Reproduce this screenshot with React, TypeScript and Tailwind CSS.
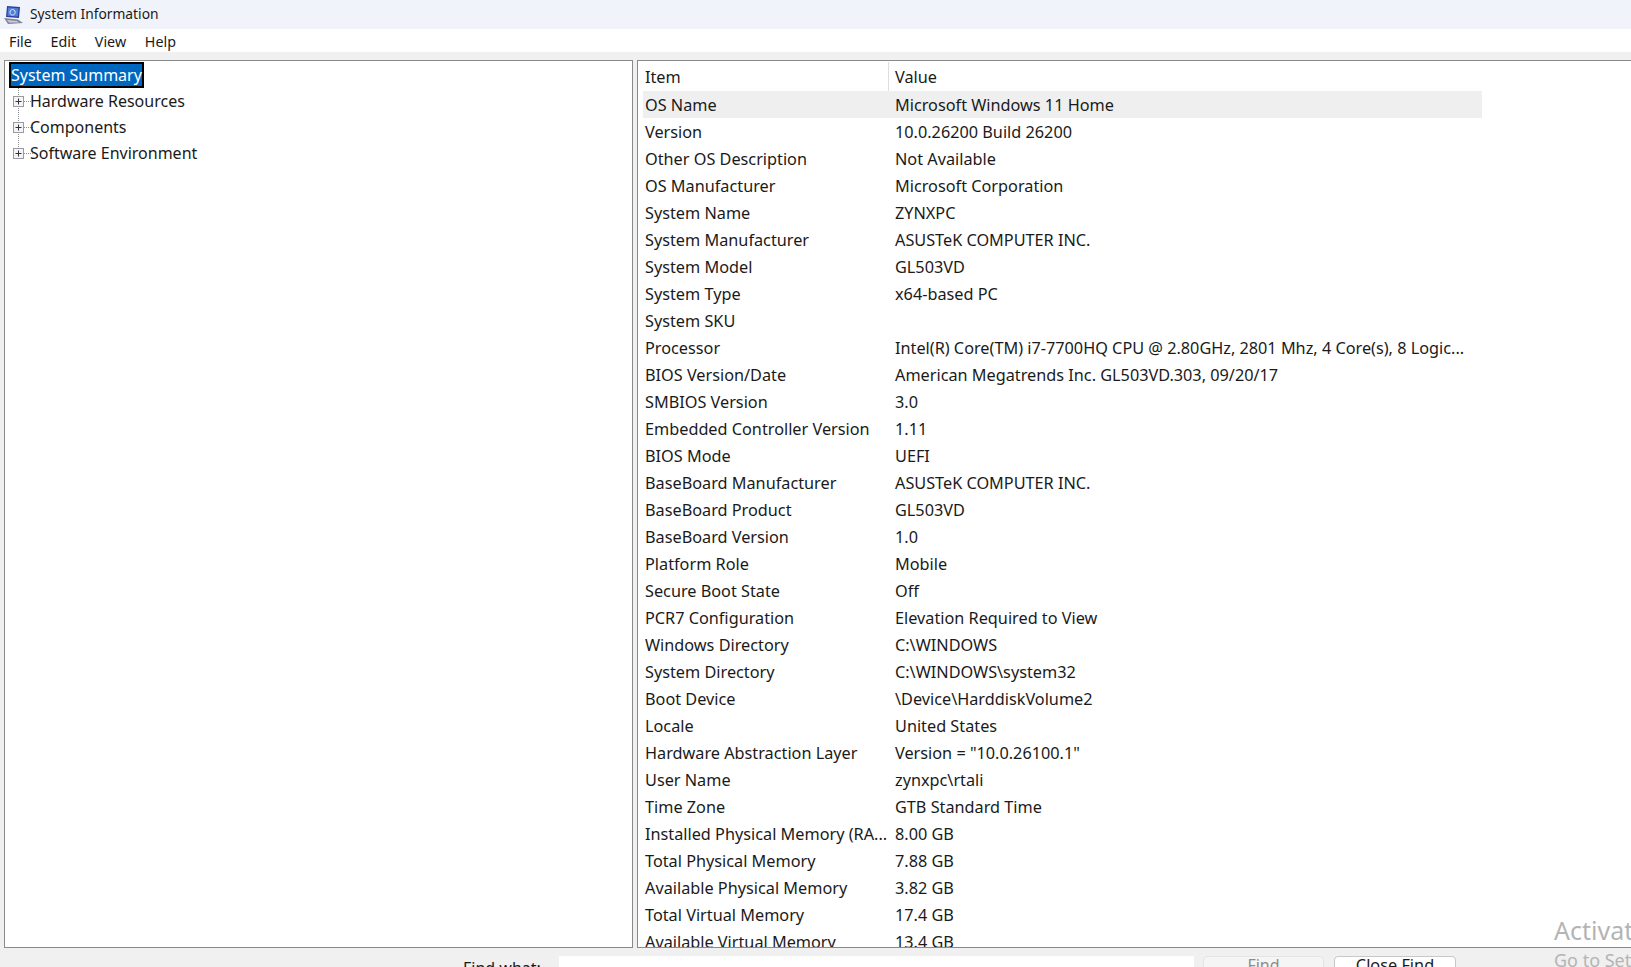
import { Fragment } from 'react';

const rows: [string, string][] = [
  ['OS Name', 'Microsoft Windows 11 Home'],
  ['Version', '10.0.26200 Build 26200'],
  ['Other OS Description', 'Not Available'],
  ['OS Manufacturer', 'Microsoft Corporation'],
  ['System Name', 'ZYNXPC'],
  ['System Manufacturer', 'ASUSTeK COMPUTER INC.'],
  ['System Model', 'GL503VD'],
  ['System Type', 'x64-based PC'],
  ['System SKU', ''],
  ['Processor', 'Intel(R) Core(TM) i7-7700HQ CPU @ 2.80GHz, 2801 Mhz, 4 Core(s), 8 Logic...'],
  ['BIOS Version/Date', 'American Megatrends Inc. GL503VD.303, 09/20/17'],
  ['SMBIOS Version', '3.0'],
  ['Embedded Controller Version', '1.11'],
  ['BIOS Mode', 'UEFI'],
  ['BaseBoard Manufacturer', 'ASUSTeK COMPUTER INC.'],
  ['BaseBoard Product', 'GL503VD'],
  ['BaseBoard Version', '1.0'],
  ['Platform Role', 'Mobile'],
  ['Secure Boot State', 'Off'],
  ['PCR7 Configuration', 'Elevation Required to View'],
  ['Windows Directory', 'C:\\WINDOWS'],
  ['System Directory', 'C:\\WINDOWS\\system32'],
  ['Boot Device', '\\Device\\HarddiskVolume2'],
  ['Locale', 'United States'],
  ['Hardware Abstraction Layer', 'Version = "10.0.26100.1"'],
  ['User Name', 'zynxpc\\rtali'],
  ['Time Zone', 'GTB Standard Time'],
  ['Installed Physical Memory (RA...', '8.00 GB'],
  ['Total Physical Memory', '7.88 GB'],
  ['Available Physical Memory', '3.82 GB'],
  ['Total Virtual Memory', '17.4 GB'],
  ['Available Virtual Memory', '13.4 GB'],
];

function AppIcon() {
  return (
    <svg width="20" height="20" viewBox="0 0 20 20" className="shrink-0">
      <path d="M4 1 L17 2 L16 13 L3 12 Z" fill="#2f3f9e" />
      <path d="M5 2.5 L15.5 3.3 L14.8 11.5 L4.5 10.7 Z" fill="#4f7fd8" />
      <path d="M9.5 4.5 a2.6 2.8 0 1 0 0.1 0 Z" fill="none" stroke="#dfe9fb" strokeWidth="1" />
      <path d="M1 13 L15 14.5 L20 18 L5 19 Z" fill="#7f8598" />
      <path d="M4 15 L14 16 L16 17.4 L6 17.4 Z" fill="#c9ccd8" />
    </svg>
  );
}

// tree expander with the dotted connector lines around it
function Expander({ last }: { last: boolean }) {
  return (
    <svg width="20" height="26" viewBox="0 0 20 26" className="shrink-0">
      <path d={last ? 'M5.5 0 V8' : 'M5.5 0 V26'} stroke="#8f8f8f" strokeDasharray="1 1" />
      <path d="M11 13.5 H20" stroke="#8f8f8f" strokeDasharray="1 1" />
      <rect x="0.5" y="8.5" width="10" height="10" fill="#f4f4f6" stroke="#9a9aa2" />
      <path d="M2.5 13.5 H8.5 M5.5 10.5 V16.5" stroke="#333" />
    </svg>
  );
}

export default function App() {
  const font = { fontFamily: '"Noto Sans", sans-serif' };
  const tree = ['Hardware Resources', 'Components', 'Software Environment'];
  return (
    <div className="relative flex h-[967px] w-[1631px] flex-col overflow-hidden bg-[#f0f0f0] text-[16.25px] text-[#1a1a1a]" style={font}>
      <div className="flex h-[29px] shrink-0 items-center gap-[7px] bg-[#f0f3f9] pl-[3px] text-[13.8px]">
        <AppIcon />
        <span>System Information</span>
      </div>
      <div className="flex h-[23px] shrink-0 items-center gap-[18.7px] bg-white pl-[9px] pt-[2px] text-[14.3px]">
        <span>File</span>
        <span>Edit</span>
        <span>View</span>
        <span>Help</span>
      </div>

      <div className="mt-[8px] flex h-[888px] shrink-0 gap-[4px] pl-[4px]">
        <div className="h-full w-[629px] shrink-0 border border-[#8a8a8a] bg-white pl-[4px] text-[16px]">
          <div className="flex h-[27px] items-center">
            <span className="flex h-[26px] items-center border-2 border-black bg-[#0067c0] text-white">System Summary</span>
          </div>
          {tree.map((t, i) => (
            <div key={t} className="flex h-[26px] items-center pl-[4px]">
              <Expander last={i === tree.length - 1} />
              <span className="-ml-[3px]">{t}</span>
            </div>
          ))}
        </div>

        <div className="h-full min-w-0 flex-1 overflow-hidden border-y border-l border-[#8a8a8a] bg-white pl-[5px] pt-[1px]">
          <div className="grid w-[839px] grid-cols-[246px_593px] grid-rows-[29px] auto-rows-[27px]">
            <div className="flex items-center border-r border-[#dedede] pl-[2px] pt-[1px]">Item</div>
            <div className="flex items-center pl-[6px] pt-[1px]">Value</div>
            {rows.map(([item, value], i) => (
              <Fragment key={item}>
                <div className={`flex items-center pl-[2px] pt-[1px] whitespace-nowrap ${i === 0 ? 'bg-[#efefef]' : ''}`}>{item}</div>
                <div className={`flex items-center pl-[6px] pt-[1px] whitespace-nowrap ${i === 0 ? 'bg-[#efefef]' : ''}`}>{value}</div>
              </Fragment>
            ))}
          </div>
        </div>
      </div>

      <div className="flex h-[60px] shrink-0 items-start pt-[8px]">
        <span className="ml-[463px] w-[96px] text-[16px]">Find what:</span>
        <div className="h-[30px] w-[635px] bg-white" />
        <button className="ml-[9px] flex h-[30px] w-[121px] items-start justify-center rounded-[4px] border border-[#e4e4e4] bg-[#f5f5f5] text-[16px] leading-[16px] text-[#8c8c8c]">Find</button>
        <button className="ml-[10px] flex h-[30px] w-[122px] items-start justify-center rounded-[4px] border border-[#c8c8c8] bg-white text-[16.3px] leading-[16px]">Close Find</button>
      </div>

      <div className="absolute left-[1554px] top-[914px] text-[25px] leading-[32px] whitespace-nowrap text-[#b4b4b4]">Activate Windows</div>
      <div className="absolute left-[1554px] top-[948px] text-[18px] leading-[24px] whitespace-nowrap text-[#b4b4b4]">Go to Settings to activate Windows.</div>
    </div>
  );
}
